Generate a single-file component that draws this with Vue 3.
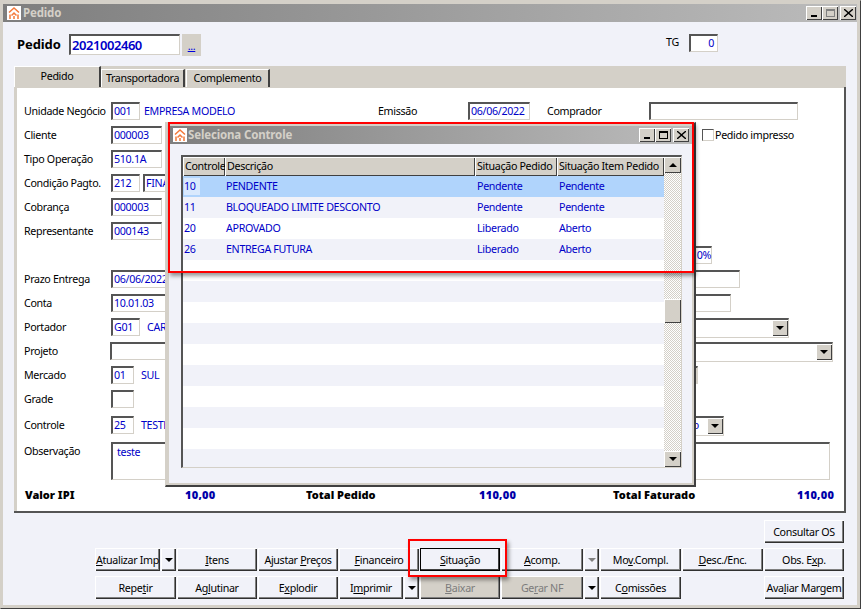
<script setup>
const rows = [
  { label: 'Cliente', fields: [{ v: '000003', w: 51 }] },
  { label: 'Tipo Operação', fields: [{ v: '510.1A', w: 51 }] },
  { label: 'Condição Pagto.', fields: [{ v: '212', w: 29 }, { v: 'FINAL', w: 60 }] },
  { label: 'Cobrança', fields: [{ v: '000003', w: 51 }] },
  { label: 'Representante', fields: [{ v: '000143', w: 51 }] },
  { label: '', fields: [], right: { kind: 'input', v: '0%', w: 60, end: 714 } },
  { label: 'Prazo Entrega', fields: [{ v: '06/06/2022', w: 70 }], right: { kind: 'input', v: '', w: 80, end: 742 } },
  { label: 'Conta', fields: [{ v: '10.01.03', w: 70 }], right: { kind: 'input', v: '', w: 80, end: 733 } },
  { label: 'Portador', fields: [{ v: 'G01', w: 29 }], text: 'CARTÃO', right: { kind: 'select', v: '', w: 130, end: 791 } },
  { label: 'Projeto', fields: [{ v: '', w: 70, shift: true }], right: { kind: 'select', v: '', w: 170, end: 835 } },
  { label: 'Mercado', fields: [{ v: '01', w: 23 }], text: 'SUL', right: { kind: 'gray', v: '', w: 40, end: 700 } },
  { label: 'Grade', fields: [{ v: '', w: 23 }], tall: true },
  { label: 'Controle', fields: [{ v: '25', w: 23 }], text: 'TESTE', right: { kind: 'select', v: 'o', w: 60, end: 726 } }
]
const grid = [
  { c: '10', d: 'PENDENTE', s: 'Pendente', i: 'Pendente', sel: true },
  { c: '11', d: 'BLOQUEADO LIMITE DESCONTO', s: 'Pendente', i: 'Pendente' },
  { c: '20', d: 'APROVADO', s: 'Liberado', i: 'Aberto' },
  { c: '26', d: 'ENTREGA FUTURA', s: 'Liberado', i: 'Aberto' }
]
const blanks = 10
</script>

<template>
  <div class="window">
    <div class="titlebar">
      <svg class="appicon" viewBox="0 0 14 14"><rect width="14" height="14" fill="#fff"/><g fill="none" stroke="#f4793a" stroke-width="1.500"><path d="M2 6.500 7 2l5 4.500M4.500 9.500 7 7l2.500 2.500M3 8.500V13M11 8.500V13M7 10v3"/></g></svg>
      <span class="title">Pedido</span>
      <div class="winbtns">
        <button class="wb"><i class="min"></i></button><button class="wb off"><i class="max"></i></button><button class="wb gap"><svg viewBox="0 0 9 8"><path d="M1 0 4.500 3 8 0h1v1L5.500 4 9 7v1H8L4.500 5 1 8H0V7l3.500-3L0 1V0z"/></svg></button>
      </div>
    </div>

    <div class="client">
      <div class="head">
        <b class="pedlabel">Pedido</b>
        <div class="inp big">2021002460</div>
        <div class="dots"><u>...</u></div>
        <span class="tg">TG</span>
        <div class="inp tginp">0</div>
      </div>

      <div class="tabs">
        <div class="tab active">Pedido</div>
        <div class="tab t2">Transportadora</div>
        <div class="tab t3">Complemento</div>
      </div>

      <div class="page">
        <div class="row">
          <span class="lab">Unidade Negócio</span>
          <div class="inp w29">001</div>
          <span class="val firstval">EMPRESA MODELO</span>
          <span class="lab emis">Emissão</span>
          <div class="inp date">06/06/2022</div>
          <span class="lab comp">Comprador</span>
          <div class="inp compinp"></div>
        </div>
        <div class="row chkrow">
          <div class="chk"></div><span class="lab">Pedido impresso</span>
        </div>

        <div v-for="r in rows" :key="r.label" class="row" :class="{ tallrow: r.tall }">
          <span class="lab">{{ r.label }}</span>
          <div
            v-for="f in r.fields"
            :key="f.w + f.v"
            class="inp field"
            :class="{ shift: f.shift }"
            :style="{ width: f.w + 'px' }"
          >{{ f.v }}</div>
          <span v-if="r.text" class="val">{{ r.text }}</span>
          <div
            v-if="r.right"
            class="right"
            :class="r.right.kind"
            :style="{ width: r.right.w + 'px', marginRight: (846 - r.right.end) + 'px' }"
          >
            <span class="rv">{{ r.right.v }}</span>
            <span v-if="r.right.kind === 'select'" class="arrowbtn"><i class="dn"></i></span>
          </div>
        </div>

        <div class="row obs">
          <span class="lab">Observação</span>
          <div class="inp area">teste</div>
        </div>

        <div class="totals">
          <b class="t-a">Valor IPI</b>
          <b class="num n1">10,00</b>
          <b class="t-b">Total Pedido</b>
          <b class="num n2">110,00</b>
          <b class="t-c">Total Faturado</b>
          <b class="num n3">110,00</b>
        </div>
      </div>

      <div class="actions">
        <div class="cell c9 top"><button class="btn">Consultar OS</button></div>

        <div class="cell"><button class="btn"><u>A</u>tualizar Imp</button><button class="btn arr"><i class="dn"></i></button></div>
        <div class="cell"><button class="btn"><u>I</u>tens</button></div>
        <div class="cell"><button class="btn">Ajustar <u>P</u>reços</button></div>
        <div class="cell"><button class="btn"><u>F</u>inanceiro</button></div>
        <div class="cell"><button class="btn focus"><u>S</u>ituação</button></div>
        <div class="cell"><button class="btn"><u>A</u>comp.</button><button class="btn arr"><i class="dn gray"></i></button></div>
        <div class="cell"><button class="btn">Mo<u>v</u>.Compl.</button></div>
        <div class="cell"><button class="btn"><u>D</u>esc./Enc.</button></div>
        <div class="cell"><button class="btn">Obs. E<u>x</u>p.</button></div>

        <div class="cell"><button class="btn">Repe<u>t</u>ir</button></div>
        <div class="cell"><button class="btn">Ag<u>l</u>utinar</button></div>
        <div class="cell"><button class="btn">E<u>x</u>plodir</button></div>
        <div class="cell"><button class="btn">I<u>m</u>primir</button><button class="btn arr"><i class="dn"></i></button></div>
        <div class="cell"><button class="btn off"><u>B</u>aixar</button></div>
        <div class="cell"><button class="btn off">Ge<u>r</u>ar NF</button><button class="btn arr"><i class="dn"></i></button></div>
        <div class="cell"><button class="btn">C<u>o</u>missões</button></div>
        <div class="cell"></div>
        <div class="cell"><button class="btn">Ava<u>l</u>iar Margem</button></div>
      </div>
    </div>

    <div class="dialog">
      <div class="titlebar dlgbar">
        <svg class="appicon" viewBox="0 0 14 14"><rect width="14" height="14" fill="#fff"/><g fill="none" stroke="#f4793a" stroke-width="1.500"><path d="M2 6.500 7 2l5 4.500M4.500 9.500 7 7l2.500 2.500M3 8.500V13M11 8.500V13M7 10v3"/></g></svg>
        <span class="title">Seleciona Controle</span>
        <div class="winbtns">
          <button class="wb"><i class="min"></i></button><button class="wb"><i class="max dark"></i></button><button class="wb gap"><svg viewBox="0 0 9 8"><path d="M1 0 4.500 3 8 0h1v1L5.500 4 9 7v1H8L4.500 5 1 8H0V7l3.500-3L0 1V0z"/></svg></button>
        </div>
      </div>
      <div class="dlgbody">
        <div class="grid">
          <div class="gridmain">
            <div class="gr ghead">
              <span class="hc">Controle</span><span class="hc">Descrição</span><span class="hc">Situação Pedido</span><span class="hc">Situação Item Pedido</span>
            </div>
            <div v-for="(g, i) in grid" :key="g.c" class="gr line" :class="{ sel: g.sel, odd: i % 2 === 1 }">
              <span class="dc"><em>{{ g.c }}</em></span><span class="dc">{{ g.d }}</span><span class="dc">{{ g.s }}</span><span class="dc">{{ g.i }}</span>
            </div>
            <div v-for="n in blanks" :key="n" class="line" :class="{ odd: n % 2 === 0 }"></div>
          </div>
          <div class="scroll">
            <span class="sb"><i class="up"></i></span>
            <span class="thumb"></span>
            <span class="sb"><i class="dn"></i></span>
          </div>
        </div>
      </div>
    </div>

    <div class="mark mark-a"></div>
    <div class="mark mark-b"></div>
  </div>
</template>

<style scoped>
.window {
  position: relative;
  width: 861px;
  height: 609px;
  box-sizing: border-box;
  overflow: hidden;
  background: #d4d0c8;
  border-top: 1px solid #d4d0c8;
  border-left: 1px solid #d4d0c8;
  border-right: 1px solid #404040;
  border-bottom: 1px solid #404040;
  padding: 3px 3px 3px 2px;
  display: flex;
  flex-direction: column;
  font-family: "Noto Sans", sans-serif;
  font-size: 10.700px;
  line-height: 18px;
  letter-spacing: -0.33px;
  color: #000;
}
.titlebar {
  height: 18px;
  flex: none;
  display: flex;
  align-items: center;
  background: linear-gradient(90deg, #7e7e7e, #bcbcbc);
  padding-left: 4px;
}
.appicon { width: 14px; height: 14px; flex: none; }
.title {
  margin-left: 2px;
  font-weight: 700;
  font-size: 11.500px;
  letter-spacing: -0.15px;
  color: #d4d0c8;
}
.dlgbar .title { margin-left: 1px; }
.winbtns { margin-left: auto; display: flex; padding-right: 1px; }
.wb {
  width: 16px;
  height: 14px;
  padding: 0;
  border: 0;
  background: #d4d0c8;
  box-shadow: inset 1px 1px #fff, inset -1px -1px #404040;
  display: flex;
  align-items: center;
  justify-content: center;
  position: relative;
}
.wb.gap { margin-left: 2px; }
.wb svg { width: 9px; height: 8px; }
.min { width: 6px; height: 2px; background: #000; margin-top: 6px; }
.max { width: 9px; height: 8px; box-sizing: border-box; border: 1px solid #808080; border-top-width: 2px; }
.max.dark { border-color: #000; }

.client {
  flex: 1;
  min-height: 0;
  background: #f1f2f9;
  padding: 12px 12px 0 11px;
  display: flex;
  flex-direction: column;
}
.head { height: 32px; flex: none; display: flex; align-items: flex-start; }
.pedlabel { font-size: 13px; letter-spacing: -0.1px; line-height: 21px; margin-left: 3px; width: 52px; }
.inp {
  box-sizing: border-box;
  height: 18px;
  flex: none;
  background: #fff;
  color: #0000c8;
  border: 1px solid #d4d0c8;
  border-top: 2px solid #555;
  border-left: 2px solid #555;
  padding: 0 1px;
  line-height: 15px;
  white-space: nowrap;
  overflow: hidden;
}
.big {
  width: 111px;
  height: 21px;
  font-size: 13px;
  letter-spacing: -0.45px;
  font-weight: 600;
  line-height: 18px;
}
.dots {
  width: 19px;
  height: 22px;
  margin-left: 2px;
  background: #d4d0c8;
  color: #0000e0;
  text-align: center;
  line-height: 24px;
}
.tg { width: 13px; margin-left: 465px; line-height: 16px; }
.tginp { width: 29px; margin-left: 10px; text-align: right; padding-right: 3px; }

.tabs {
  height: 21px;
  flex: none;
  background: #d4d0c8;
  display: flex;
  align-items: flex-end;
  margin-right: -1px;
}
.tab { box-sizing: border-box; height: 18px; text-align: center; background: #f1f2f9; line-height: 16px; border-top: 1px solid #fff; border-left: 1px solid #fff; border-right: 2px solid #404040; }
.tab.active { width: 87px; height: 21px; background: #d4d0c8; line-height: 18px; }
.t2 { width: 84px; margin-right: 1px; background: #d4d0c8; }
.t3 { width: 84px; background: #d4d0c8; }

.page {
  height: 424px;
  flex: none;
  box-sizing: border-box;
  position: relative;
  margin-right: -1px;
  background: #fff;
  border-left: 3px solid #d4d0c8;
  border-right: 2px solid #555;
  box-shadow: inset 0 1px #d4d0c8, 0 2px #555;
  padding: 15px 0 0 7px;
}
.row { height: 24px; display: flex; align-items: flex-start; position: relative; }
.lab { flex: none; width: 87px; white-space: nowrap; line-height: 18px; }
.val { color: #0000c8; white-space: nowrap; margin-left: 4px; }
.firstval { width: 234px; flex: none; }
.w29 { width: 29px; }
.emis { width: 90px; }
.date { width: 62px; }
.comp { width: 102px; margin-left: 17px; }
.compinp { width: 149px; }
.chkrow { position: absolute; left: 685px; top: 39px; }
.chk { box-sizing: border-box; width: 12px; height: 12px; margin: 3px 1px 0 0; border: 1px solid #d4d0c8; border-top: 1px solid #555; border-left: 1px solid #555; }
.field { margin-right: 3px; }
.shift { margin-left: -1px; }
.tallrow { height: 26px; }

.right {
  margin-left: auto;
  box-sizing: border-box;
  height: 18px;
  flex: none;
  background: #fff;
  color: #0000c8;
  border: 1px solid #d4d0c8;
  border-top: 2px solid #555;
  border-left: 2px solid #555;
  text-align: right;
  line-height: 15px;
  display: flex;
  justify-content: flex-end;
}
.right.select { height: 20px; }
.right.select .rv { padding-right: 8px; }
.right.gray { background: #d4d0c8; }
.rv { flex: 1; }
.arrowbtn {
  width: 16px;
  height: 16px;
  margin: 0;
  background: #d4d0c8;
  box-shadow: inset 1px 1px #fff, inset -1px -1px #404040;
  display: flex;
  align-items: center;
  justify-content: center;
  flex: none;
}
.dn { width: 0; height: 0; border: 4px solid transparent; border-top: 4px solid #000; border-bottom: 0; display: block; }
.dn.gray { border-top-color: #808080; }
.up { width: 0; height: 0; border: 4px solid transparent; border-bottom: 4px solid #000; border-top: 0; display: block; }

.obs { height: auto; margin-top: 2px; }
.area { width: 719px; height: 38px; padding: 0 0 0 4px; line-height: 17px; }

.totals { position: relative; height: 18px; margin-top: 6px; font-weight: 700; font-size: 11px; }
.totals b { position: absolute; top: 0; white-space: nowrap; letter-spacing: 0; }
.t-a { left: 1px; }
.t-b { left: 282px; }
.t-c { left: 589px; }
.num { color: #0000a8; }
.totals .num { letter-spacing: 0.25px; }
.n1 { left: 161px; }
.n2 { left: 455px; }
.n3 { left: 773px; }

.actions {
  flex: 1;
  display: grid;
  grid-template-columns: 81px 80px 80px 80px 80px 98px 81px 81px 80px;
  grid-template-rows: 23px 23px 23px;
  column-gap: 1px;
  row-gap: 5px;
  margin: 9px 0 0 81px;
  align-content: start;
}
.cell { display: flex; gap: 1px; min-width: 0; }
.c9 { grid-column: 9; }
.btn {
  flex: 1;
  min-width: 0;
  padding: 0;
  border: 0;
  background: #f1f2f9;
  font: inherit;
  letter-spacing: inherit;
  color: #000;
  white-space: nowrap;
  box-shadow: inset 1px 1px #fff, inset -1px -1px #303030, inset -2px -2px #808080;
}
.btn.arr { flex: 0 0 15px; display: flex; align-items: center; justify-content: center; }
.btn.off { background: #d4d0c8; color: #7c7c7c; }
.btn.focus { box-shadow: inset 0 0 0 1px #000, inset -2px -2px #404040; }

.dialog {
  position: absolute;
  left: 164px;
  top: 121px;
  width: 531px;
  height: 365px;
  box-sizing: border-box;
  background: #d4d0c8;
  border-top: 1px solid #d4d0c8;
  border-left: 1px solid #d4d0c8;
  border-right: 2px solid #404040;
  border-bottom: 2px solid #404040;
  padding: 3px 2px 2px 3px;
  display: flex;
  flex-direction: column;
}
.dialog .winbtns { padding-right: 3px; }
.dlgbody { flex: 1; min-height: 0; background: #f1f2f9; padding: 11px 10px 15px 12px; }
.grid {
  box-sizing: border-box;
  height: 100%;
  display: flex;
  background: #fff;
  border: 1px solid #d4d0c8;
  border-top: 2px solid #555;
  border-left: 2px solid #555;
}
.gridmain { flex: 1; min-width: 0; overflow: hidden; background: #fff; }
.gr { display: grid; grid-template-columns: 42px 250px 82px 107px; }
.ghead { height: 19px; background: #d4d0c8; }
.hc { padding-left: 2px; box-sizing: border-box; white-space: nowrap; overflow: hidden; line-height: 19px; box-shadow: inset 1px 1px #fff, inset -1px -1px #404040; }
.line { height: 21px; line-height: 21px; color: #0000c8; }
.line.odd { background: #f1f2f9; }
.line.sel { background: #b0d4fc; }
.dc { padding-left: 2px; white-space: nowrap; }
.dc:first-child { padding-left: 1px; }
.dc:nth-child(2) { padding-left: 1px; }
.dc em { font-style: normal; display: inline-block; width: 16px; line-height: 17px; background: none; }
.sel .dc em { background: #d9e9fd; }
.scroll {
  width: 17px;
  flex: none;
  display: flex;
  flex-direction: column;
  justify-content: space-between;
  background: repeating-conic-gradient(#d4d0c8 0 25%, #fff 0 50%) 0 0 / 2px 2px;
  position: relative;
}
.sb {
  height: 16px;
  background: #d4d0c8;
  box-shadow: inset 1px 1px #fff, inset -1px -1px #404040;
  display: flex;
  align-items: center;
  justify-content: center;
}
.thumb {
  position: absolute;
  left: 0;
  right: 0;
  top: 142px;
  height: 24px;
  background: #d4d0c8;
  box-shadow: inset 1px 1px #fff, inset -1px -1px #404040;
}
.mark {
  position: absolute;
  box-sizing: border-box;
  border: 2px solid #f00;
  box-shadow: 2px 3px 4px rgba(0, 0, 0, 0.4);
  pointer-events: none;
}
.mark-a { left: 167px; top: 121px; width: 526px; height: 151px; }
.mark-b { left: 407px; top: 538px; width: 99px; height: 38px; }
</style>
<style>
html, body { margin: 0; background: #d4d0c8; }
</style>
